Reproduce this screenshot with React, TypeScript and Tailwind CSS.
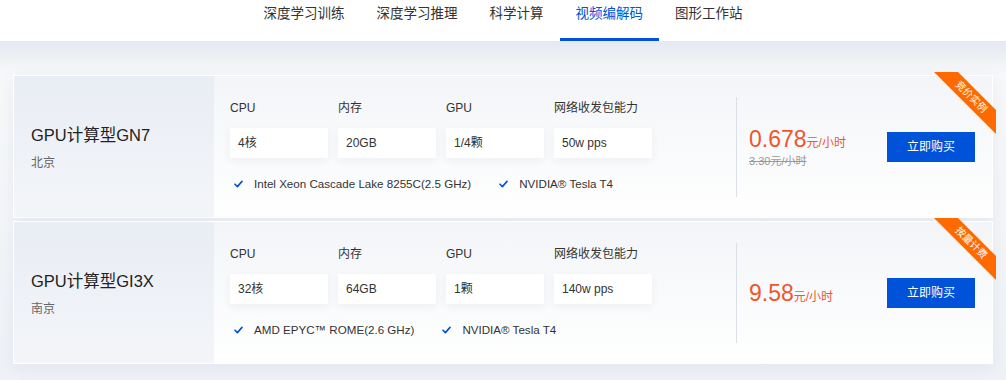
import { Fragment } from 'react'

type Instance = {
  name: string
  region: string
  specs: { label: string; value: string }[]
  features: string[]
  price: string
  original?: string
  ribbon: string
}

const TABS = ['深度学习训练', '深度学习推理', '科学计算', '视频编解码', '图形工作站']

const INSTANCES: Instance[] = [
  {
    name: 'GPU计算型GN7',
    region: '北京',
    specs: [
      { label: 'CPU', value: '4核' },
      { label: '内存', value: '20GB' },
      { label: 'GPU', value: '1/4颗' },
      { label: '网络收发包能力', value: '50w pps' },
    ],
    features: ['Intel Xeon Cascade Lake 8255C(2.5 GHz)', 'NVIDIA® Tesla T4'],
    price: '0.678',
    original: '3.30元/小时',
    ribbon: '竞价实例',
  },
  {
    name: 'GPU计算型GI3X',
    region: '南京',
    specs: [
      { label: 'CPU', value: '32核' },
      { label: '内存', value: '64GB' },
      { label: 'GPU', value: '1颗' },
      { label: '网络收发包能力', value: '140w pps' },
    ],
    features: ['AMD EPYC™ ROME(2.6 GHz)', 'NVIDIA® Tesla T4'],
    price: '9.58',
    ribbon: '按量计费',
  },
]

function Check() {
  return (
    <svg width="9" height="8" viewBox="0 0 9 8" fill="none" className="shrink-0">
      <polyline points="1,4.2 3.4,6.6 8,1.4" stroke="#0052d9" strokeWidth="1.6" strokeLinecap="round" strokeLinejoin="round" />
    </svg>
  )
}

function Ribbon({ text }: { text: string }) {
  return (
    <div className="absolute -top-1 -right-1 w-[62px] h-[62px] pointer-events-none">
      <div className="absolute inset-0 bg-[#ff6a00] [clip-path:polygon(0_0,24px_0,100%_38px,100%_100%)]" />
      <span className="absolute left-[37px] top-[25px] -translate-x-1/2 -translate-y-1/2 rotate-45 text-[10px] leading-[12px] text-white whitespace-nowrap">
        {text}
      </span>
    </div>
  )
}

function InstanceCard({ item }: { item: Instance }) {
  return (
    <div className="relative flex h-[143px] bg-white border border-white shadow-[0_4px_16px_rgba(30,50,90,0.06)]">
      <div className="w-[200px] shrink-0 flex flex-col justify-center pl-[17px] bg-gradient-to-b from-[#e9edf4] to-[#f3f5f9]">
        <div className="text-[16.5px] leading-[22px] text-[#222]">{item.name}</div>
        <div className="mt-[10px] text-[12px] leading-[14px] text-[#666]">{item.region}</div>
      </div>

      <div className="flex flex-1 items-center bg-gradient-to-b from-[#f3f5f8] to-white">
        <div className="w-[522px] h-full pl-4 pt-[25px]">
          <div className="grid grid-cols-[98px_98px_98px_98px] gap-x-[10px]">
            {item.specs.map((s) => (
              <Fragment key={s.label}>
                <div>
                  <div className="text-[12px] leading-[14px] text-[#333]">{s.label}</div>
                  <div className="mt-[13px] h-[30px] flex items-center pl-[8px] bg-white text-[12px] text-[#333] shadow-[0_3px_10px_rgba(30,50,90,0.06)]">
                    {s.value}
                  </div>
                </div>
              </Fragment>
            ))}
          </div>
          <div className="mt-[19px] flex items-center gap-[28px] pl-[4px]">
            {item.features.map((f) => (
              <div key={f} className="flex items-center gap-[11px] text-[11.6px] leading-[14px] text-[#333]">
                <Check />
                <span>{f}</span>
              </div>
            ))}
          </div>
        </div>

        <div className="w-px h-[100px] bg-[#dcdfe6]" />

        <div className="flex flex-1 items-center justify-between pl-[12px] pr-[17px]">
          <div className="flex flex-col">
            <div className="flex items-baseline text-[#f0552f]">
              <span className="text-[23px] leading-[26px]">{item.price}</span>
              <span className="text-[12px]">元/小时</span>
            </div>
            {item.original && (
              <div className="mt-[2px] text-[11px] leading-[14px] text-[#999] line-through">{item.original}</div>
            )}
          </div>
          <button className="w-[88px] h-[30px] bg-[#0052d9] text-white text-[12px] flex items-center justify-center">
            立即购买
          </button>
        </div>
      </div>

      <Ribbon text={item.ribbon} />
    </div>
  )
}

export default function App() {
  return (
    <div className="w-[1006px] h-[380px] overflow-hidden bg-white font-['Liberation_Sans','Noto_Sans_CJK_SC',sans-serif]">
      <nav className="h-[41px] flex justify-center">
        {TABS.map((t) => {
          const active = t === '视频编解码'
          return (
            <div
              key={t}
              className={
                active
                  ? 'h-[41px] px-4 pt-[4px] border-b-[3px] border-[#0052d9] text-[13.5px] leading-[20px] text-[#0052d9]'
                  : 'h-[41px] px-4 pt-[4px] border-b-[3px] border-transparent text-[13.5px] leading-[20px] text-[#333]'
              }
            >
              {t}
            </div>
          )
        })}
      </nav>

      <main className="h-[339px] px-[13px] pt-[34px] bg-[linear-gradient(180deg,#e5e9f0_0px,#f7f8fa_34px,#eef1f6_100%)]">
        <div className="flex flex-col gap-[3px]">
          {INSTANCES.map((item) => (
            <InstanceCard key={item.name} item={item} />
          ))}
        </div>
      </main>
    </div>
  )
}
